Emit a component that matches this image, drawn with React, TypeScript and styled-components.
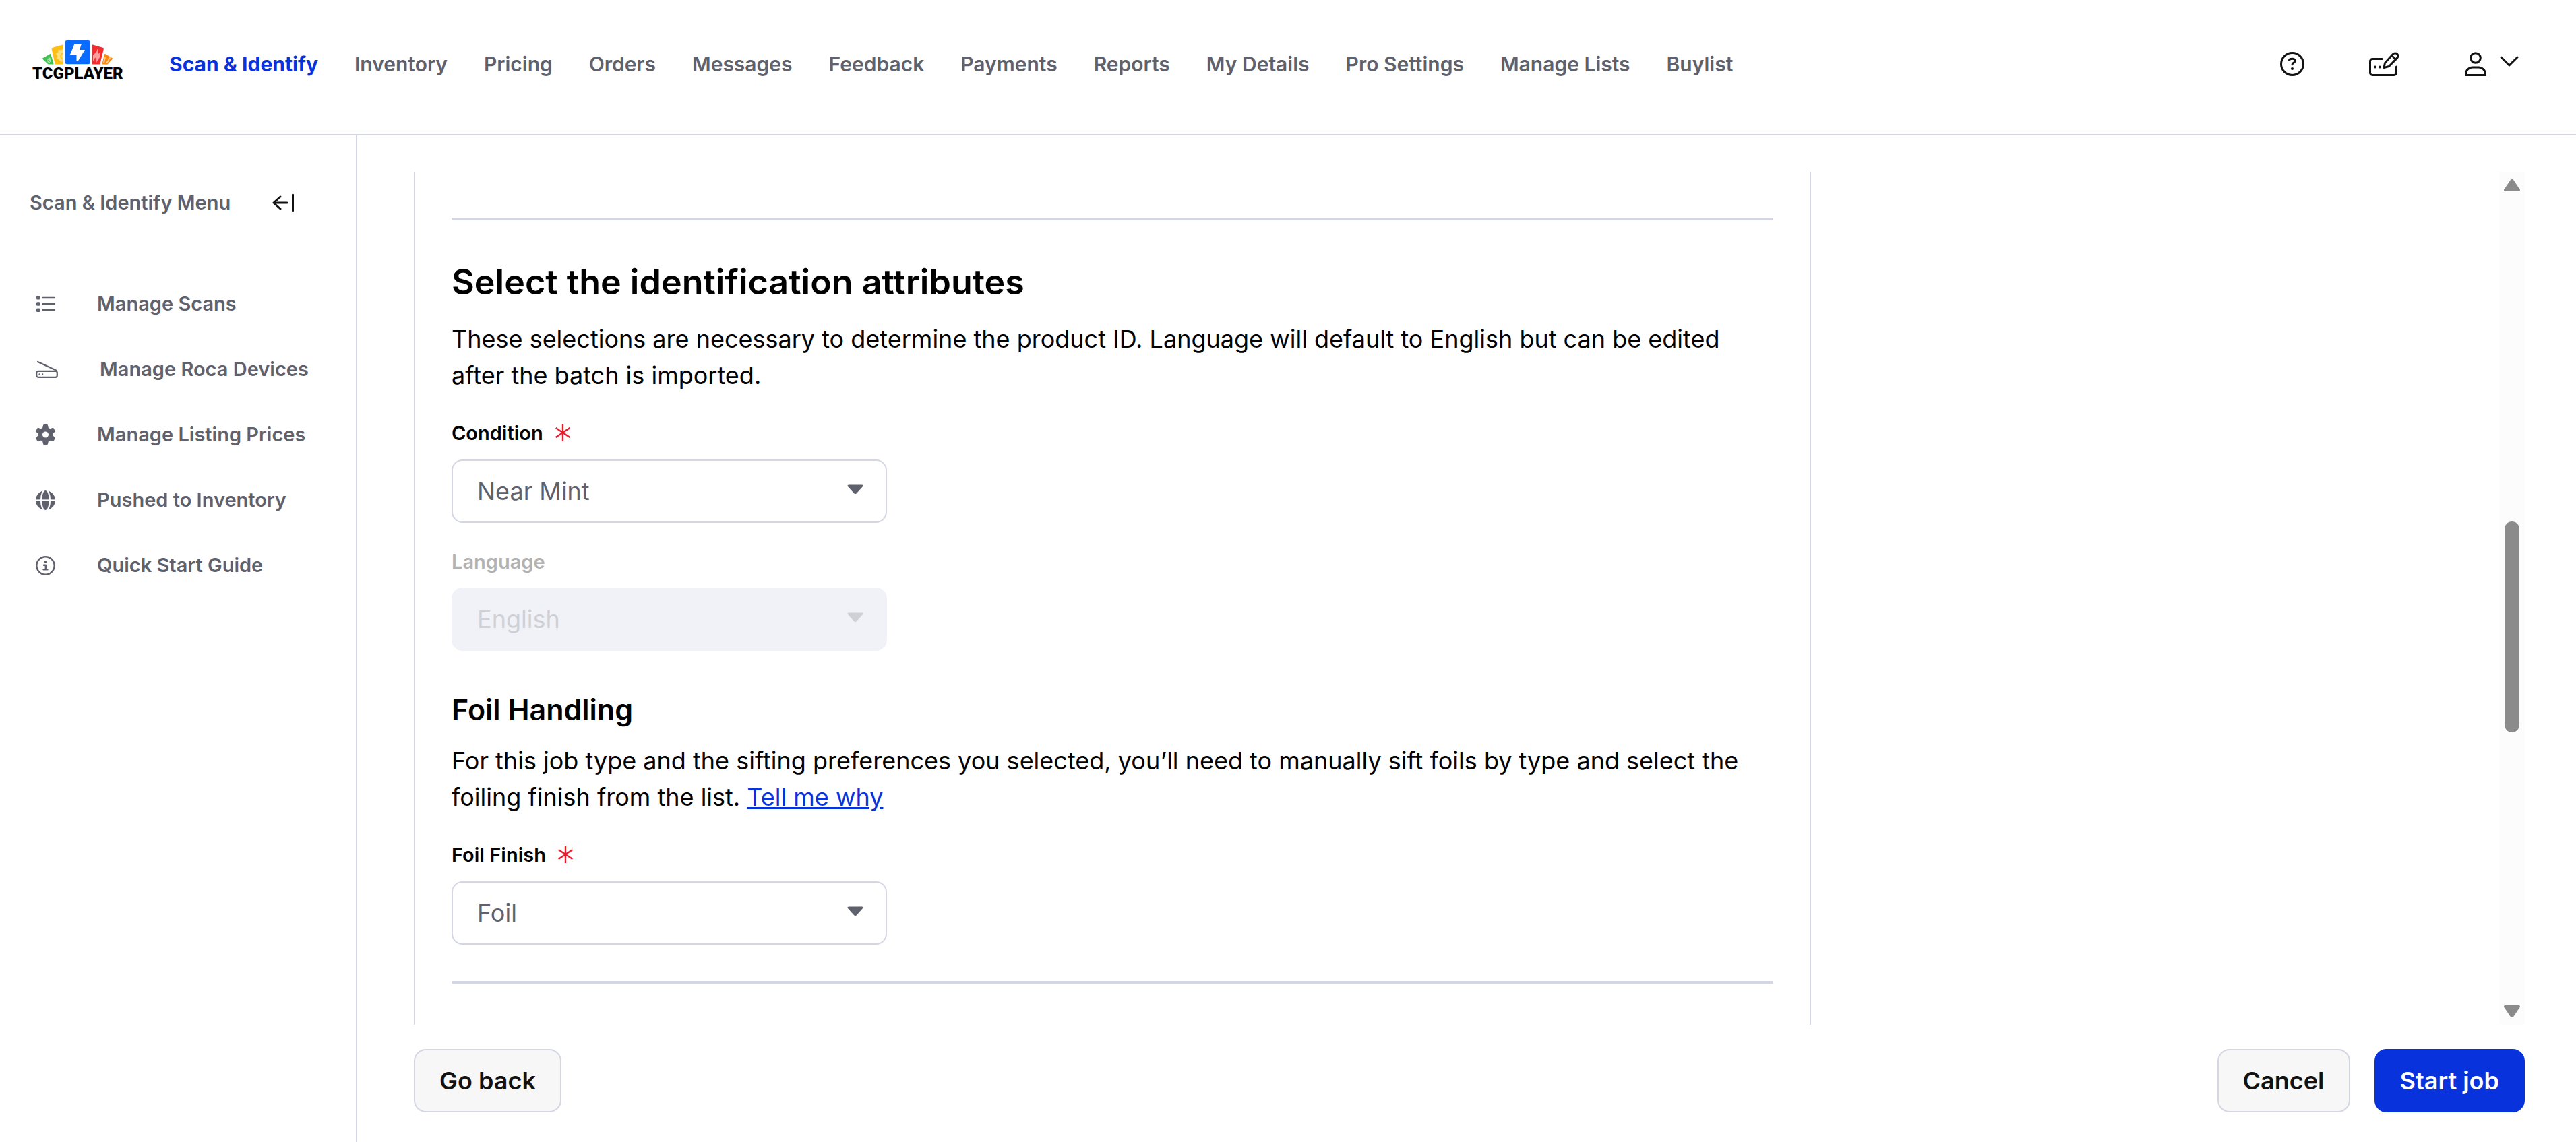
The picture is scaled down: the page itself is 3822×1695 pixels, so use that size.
import React, { useState } from "react";
import styled, { createGlobalStyle, css } from "styled-components";

const GlobalStyle = createGlobalStyle`
  *, *::before, *::after { box-sizing: border-box; }
  body { margin: 0; background: #fff; color: #000; font-family: Inter, "Liberation Sans", sans-serif; }
  button, select { font: inherit; }
  a { color: inherit; }
`;

const line = "#d4d7e3";
const slate = "#5f616d";
const blue = "#0833dc";
const ink = "#121212";

const Page = styled.div`
  display: flex;
  flex-direction: column;
  height: 100vh;
`;

const Header = styled.header`
  display: flex;
  align-items: center;
  height: 201px;
  padding: 0 85px 10px 48px;
  border-bottom: 2px solid ${line};
`;

const LogoLink = styled.a`
  display: flex;
  width: 136px;
  margin-right: 67px;
`;

const TopNav = styled.nav`
  display: flex;
  flex: 1;
  gap: 54px;
`;

const TopLink = styled.a<{ $active?: boolean }>`
  font-size: 30px;
  line-height: 40px;
  font-weight: ${(p) => (p.$active ? 700 : 600)};
  color: ${(p) => (p.$active ? blue : slate)};
  text-decoration: none;
  white-space: nowrap;
`;

const Tools = styled.div`
  display: flex;
  align-items: center;
  gap: 96px;
`;

const IconButton = styled.button`
  display: flex;
  align-items: center;
  gap: 20px;
  padding: 0;
  border: 0;
  background: none;
  color: ${ink};
  cursor: pointer;
`;

const Body = styled.div`
  display: flex;
  flex: 1;
  min-height: 0;
`;

const Sidebar = styled.aside`
  flex: none;
  width: 530px;
  padding: 80px 44px 0;
  border-right: 2px solid ${line};
`;

const SideHead = styled.div`
  display: flex;
  align-items: center;
  justify-content: space-between;
  padding-right: 46px;
`;

const SideTitle = styled.h2`
  margin: 0;
  font-size: 29px;
  line-height: 40px;
  font-weight: 600;
  color: ${slate};
`;

const SideList = styled.ul`
  display: flex;
  flex-direction: column;
  gap: 57px;
  margin: 110px 0 0;
  padding: 0 0 0 9px;
  list-style: none;
`;

const SideLink = styled.a`
  display: flex;
  align-items: center;
  gap: 62px;
  height: 40px;
  font-size: 29px;
  line-height: 40px;
  font-weight: 600;
  color: ${slate};
  text-decoration: none;
  white-space: nowrap;
`;

const Main = styled.main`
  display: flex;
  flex: 1;
  flex-direction: column;
  min-width: 0;
  padding: 54px 76px 44px 84px;
`;

const ScrollRow = styled.div`
  display: flex;
  flex: 1;
  min-height: 0;
`;

const Viewport = styled.div`
  flex: 1;
  min-width: 0;
  overflow: hidden;
`;

const Card = styled.section`
  max-width: 67%;
  min-height: 100%;
  padding: 68px 54px 60px;
  border: solid ${line};
  border-width: 0 2px;
`;

const Rule = styled.hr<{ $spaced?: boolean }>`
  height: 4px;
  margin: ${(p) => (p.$spaced ? "54px 0 0" : 0)};
  border: 0;
  background: ${line};
`;

const Title = styled.h1`
  margin: 58px 0 23px;
  font-size: 52px;
  line-height: 68px;
  font-weight: 600;
`;

const Subtitle = styled.h2`
  margin: 60px 0 22px;
  font-size: 43px;
  line-height: 54px;
  font-weight: 600;
`;

const Copy = styled.p`
  margin: 0;
  font-size: 36px;
  line-height: 54px;
`;

const TextLink = styled.a`
  color: ${blue};
  text-decoration: underline;
`;

const Field = styled.div`
  margin-top: 38px;
`;

const Label = styled.label<{ $disabled?: boolean }>`
  display: flex;
  align-items: center;
  gap: 18px;
  height: ${(p) => (p.$disabled ? 38 : 40)}px;
  margin-bottom: 20px;
  font-size: 29px;
  font-weight: 600;
  color: ${(p) => (p.$disabled ? "#b2b2b2" : "#000")};
`;

const SelectWrap = styled.div`
  display: grid;
  align-items: center;
  width: 646px;
  > * { grid-area: 1 / 1; }
  > svg { justify-self: end; margin-right: 35px; pointer-events: none; }
`;

const Select = styled.select`
  width: 100%;
  height: 94px;
  padding: 0 80px 0 36px;
  border: 2px solid ${line};
  border-radius: 16px;
  background: #fff;
  color: ${slate};
  font-size: 36px;
  appearance: none;
  &:disabled {
    border-color: #f1f2f7;
    background: #f1f2f7;
    color: #cfd0d5;
    opacity: 1;
  }
`;

const Track = styled.div`
  display: flex;
  flex-direction: column;
  align-items: center;
  width: 38px;
  padding: 11px 0;
  background: #fcfcfc;
`;

const Space = styled.div<{ $grow: number }>`
  flex: ${(p) => p.$grow} 0 0;
`;

const Thumb = styled.div<{ $grow: number }>`
  flex: ${(p) => p.$grow} 0 0;
  width: 22px;
  border-radius: 11px;
  background: #8b8b8b;
`;

const Footer = styled.footer`
  display: flex;
  align-items: center;
  gap: 36px;
  padding-top: 36px;
`;

const Button = styled.button<{ $primary?: boolean; $push?: boolean }>`
  height: 94px;
  padding: 0 36px;
  border: 2px solid ${line};
  border-radius: 18px;
  background: #f7f7f7;
  color: ${ink};
  font-size: 36px;
  font-weight: 600;
  cursor: pointer;
  ${(p) => p.$push && css`margin-right: auto;`}
  ${(p) =>
    p.$primary &&
    css`
      border-color: ${blue};
      background: ${blue};
      color: #fff;
    `}
`;

const LogoText = styled.text`
  font-family: Roboto, sans-serif;
  font-size: 24px;
  font-weight: 900;
`;

const Logo = () => (
  <svg width="136" height="70" viewBox="0 0 136 70" role="img" aria-label="TCGplayer">
    <g strokeLinejoin="round" strokeWidth="2">
      <path d="M16 27 26.500 21 30.500 34.500H24Z" fill="#41c252" stroke="#41c252" />
      <path d="M29.500 12 45 7.500V34.500H34.500Z" fill="#ffbe14" stroke="#ffbe14" />
      <path d="M89.500 7.500 105 12 99.500 34.500H89.500Z" fill="#f22d2d" stroke="#f22d2d" />
      <path d="M108 21 118 27 111 34.500H104.500Z" fill="#fd870c" stroke="#fd870c" />
    </g>
    <path d="M23 34C20 28 23 25 27 25l1 8c-3 2-5 0-5 0Zm0-5 5 5" fill="#a5e3ad" stroke="#41c252" strokeWidth="1" />
    <path d="m45.500 12.500-3 2-4-1v4l-4 2 3 4-2 4 4 1 2 3h4Z" fill="#ffdf80" />
    <path d="M45 19a5 5 0 0 0 0 9" fill="none" stroke="#ffbe14" strokeWidth="1.500" />
    <path d="m97 12 1 8 2-2v7l-5 8v-8l-3 2-2 4v-9l5-5Z" fill="#fb9e9e" />
    <path d="m106 33 2-8m2 8c4-2 2-5 6-8" fill="none" stroke="#ffd09a" strokeWidth="2" />
    <rect x="48.500" width="37.500" height="35.300" rx="3" fill="#0a6cff" />
    <path d="M62.500 5H73L70 14H78L67.500 31 65.500 30.500V22H55.600Z" fill="#fff" />
    <LogoText x="0" y="57">TCGPLAYER</LogoText>
  </svg>
);

const strokes = {
  fill: "none",
  stroke: "currentColor",
  strokeLinecap: "round",
  strokeLinejoin: "round",
} as const;

const HelpIcon = () => (
  <svg width="36" height="36" viewBox="0 0 36 36" {...strokes} strokeWidth="3">
    <circle cx="18" cy="18" r="16.500" />
    <path d="M13.500 12.500C13.500 10 22.500 9 22.500 13.200c0 3-4.500 2.800-4.500 5.600" />
    <circle cx="18" cy="25" r="2.100" fill="currentColor" stroke="none" />
  </svg>
);

const ChequeIcon = () => (
  <svg width="46" height="36" viewBox="0 0 46 36" {...strokes} strokeWidth="3">
    <path d="M19.500 10.500H5A3.500 3.500 0 0 0 1.500 14V31A3.500 3.500 0 0 0 5 34.500H37A3.500 3.500 0 0 0 40.500 31V22" />
    <path d="M22 23.500 23.500 16.500 35.500 3.300a4.200 4.200 0 0 1 6.300 5.600L29.500 21.500Z" />
    <path d="m33.500 5.500 6 5.500" />
    <circle cx="9" cy="22.500" r="2.100" fill="currentColor" stroke="none" />
    <circle cx="16" cy="22.500" r="2.100" fill="currentColor" stroke="none" />
  </svg>
);

const UserIcon = () => (
  <svg width="32" height="36" viewBox="0 0 32 36" {...strokes} strokeWidth="3">
    <circle cx="16" cy="9" r="7.300" />
    <path d="M1.500 34.500v-1.500a10 10 0 0 1 10-10h9a10 10 0 0 1 10 10v1.500Z" />
  </svg>
);

const ChevronIcon = () => (
  <svg width="28" height="24" viewBox="0 0 28 24" {...strokes} strokeWidth="3">
    <path d="m2 2 12 12 12-12" />
  </svg>
);

const CollapseIcon = () => (
  <svg width="34" height="28" viewBox="0 0 34 28" {...strokes} strokeWidth="3">
    <path d="M12 5 2 14l10 9M2 14h20M30.500 2v24" />
  </svg>
);

const ListIcon = () => (
  <svg width="29" height="26" viewBox="0 0 29 26" {...strokes} strokeWidth="2.400">
    <path d="M10.500 4H27.500M10.500 13H27.500M10.500 22H27.500" />
    <g fill="currentColor" stroke="none">
      <rect x="1" y="1" width="5.500" height="5.500" rx="1.500" />
      <rect x="1" y="10.200" width="5.500" height="5.500" rx="1.500" />
      <rect x="1" y="19.400" width="5.500" height="5.500" rx="1.500" />
    </g>
  </svg>
);

const ScannerIcon = () => (
  <svg width="33" height="26" viewBox="0 0 33 26" {...strokes} strokeWidth="2.200">
    <rect x="1.200" y="15.800" width="30.600" height="9" rx="2.500" />
    <path d="M3 2 30 14.500" />
    <path d="M5.500 20.300h.3M10 20.300h.3" />
  </svg>
);

const GearIcon = () => (
  <svg width="29" height="30" viewBox="0 0 29 30">
    <path
      fill="currentColor"
      fillRule="evenodd"
      d="M12.500 0h4a1.500 1.500 0 0 1 1.500 1.200l.8 3.600 2.400 1.400 3.600-1.200a1.500 1.500 0 0 1 1.800.6l2 3.600a1.500 1.500 0 0 1-.3 1.900L25.500 13.500v3l2.800 2.400a1.500 1.500 0 0 1 .3 1.900l-2 3.600a1.500 1.500 0 0 1-1.800.6l-3.600-1.200-2.400 1.400-.8 3.600a1.500 1.500 0 0 1-1.500 1.200h-4a1.500 1.500 0 0 1-1.500-1.200l-.8-3.600-2.400-1.400-3.600 1.200a1.500 1.500 0 0 1-1.800-.6l-2-3.600a1.500 1.500 0 0 1 .3-1.900l2.800-2.400v-3L.7 11.100A1.500 1.500 0 0 1 .4 9.200l2-3.600A1.500 1.500 0 0 1 4.200 5l3.600 1.200 2.400-1.400.8-3.600A1.500 1.500 0 0 1 12.500 0Zm2 10.500a4.500 4.500 0 1 0 0 9 4.500 4.500 0 0 0 0-9Z"
    />
  </svg>
);

const GlobeIcon = () => (
  <svg width="29" height="29" viewBox="0 0 29 29">
    <circle cx="14.500" cy="14.500" r="14.500" fill="currentColor" />
    <ellipse cx="14.500" cy="14.500" rx="6.500" ry="15.600" fill="none" stroke="#fff" strokeWidth="2.200" />
    <path d="M0 14.500H29" stroke="#fff" strokeWidth="2.200" />
  </svg>
);

const InfoIcon = () => (
  <svg width="29" height="29" viewBox="0 0 29 29" {...strokes} strokeWidth="2.400">
    <circle cx="14.500" cy="14.500" r="13.200" />
    <path d="M12 13.800h2.800v6.200M11.500 20.300h6" />
    <circle cx="14.500" cy="9" r="1.800" fill="currentColor" stroke="none" />
  </svg>
);

const RequiredMark = () => (
  <svg width="22" height="26" viewBox="0 0 22 26" fill="none" stroke="#ea1c2c" strokeWidth="2.400" role="img" aria-label="required">
    <path d="M11 0v26M.6 6 21.400 20M21.400 6 .6 20" />
  </svg>
);

const Caret = ({ up, color }: { up?: boolean; color: string }) => (
  <svg width="24" height="18" viewBox="0 0 24 18" fill={color} stroke={color} strokeWidth="4" strokeLinejoin="round">
    <path d={up ? "M2 16H22L12.500 2H11.500Z" : "M2 2H22L12.500 16H11.500Z"} />
  </svg>
);

const SelectCaret = ({ color }: { color: string }) => (
  <svg width="24" height="20" viewBox="0 0 24 20" fill={color} stroke={color} strokeWidth="3" strokeLinejoin="round">
    <path d="M2 2H22L12.500 12.500H11.500Z" />
  </svg>
);

const sections = [
  "Scan & Identify", "Inventory", "Pricing", "Orders", "Messages", "Feedback",
  "Payments", "Reports", "My Details", "Pro Settings", "Manage Lists", "Buylist",
];

const menu = [
  { label: "Manage Scans", Icon: ListIcon },
  { label: "Manage Roca Devices", Icon: ScannerIcon },
  { label: "Manage Listing Prices", Icon: GearIcon },
  { label: "Pushed to Inventory", Icon: GlobeIcon },
  { label: "Quick Start Guide", Icon: InfoIcon },
];

type DropdownProps = {
  id: string;
  label: string;
  options: string[];
  required?: boolean;
  disabled?: boolean;
};

const Dropdown = ({ id, label, options, required, disabled }: DropdownProps) => {
  const [value, setValue] = useState(options[0]);
  return (
    <Field>
      <Label htmlFor={id} $disabled={disabled}>
        {label}
        {required && <RequiredMark />}
      </Label>
      <SelectWrap>
        <Select id={id} value={value} disabled={disabled} onChange={(e) => setValue(e.target.value)}>
          {options.map((o) => (
            <option key={o}>{o}</option>
          ))}
        </Select>
        <SelectCaret color={disabled ? "#cfd0d5" : slate} />
      </SelectWrap>
    </Field>
  );
};

export default function App() {
  return (
    <Page>
      <GlobalStyle />
      <Header>
        <LogoLink href="#home">
          <Logo />
        </LogoLink>
        <TopNav>
          {sections.map((name, i) => (
            <TopLink key={name} href="#" $active={i === 0}>
              {name}
            </TopLink>
          ))}
        </TopNav>
        <Tools>
          <IconButton aria-label="Help"><HelpIcon /></IconButton>
          <IconButton aria-label="Feedback form"><ChequeIcon /></IconButton>
          <IconButton aria-label="Account">
            <UserIcon />
            <ChevronIcon />
          </IconButton>
        </Tools>
      </Header>
      <Body>
        <Sidebar>
          <SideHead>
            <SideTitle>Scan &amp; Identify Menu</SideTitle>
            <IconButton aria-label="Collapse menu"><CollapseIcon /></IconButton>
          </SideHead>
          <SideList>
            {menu.map(({ label, Icon }) => (
              <li key={label}>
                <SideLink href="#">
                  <Icon />
                  {label}
                </SideLink>
              </li>
            ))}
          </SideList>
        </Sidebar>
        <Main>
          <ScrollRow>
            <Viewport>
              <Card>
                <Rule />
                <Title>Select the identification attributes</Title>
                <Copy>
                  These selections are necessary to determine the product ID. Language will default to English
                  but can be edited after the batch is imported.
                </Copy>
                <Dropdown id="condition" label="Condition" options={["Near Mint"]} required />
                <Dropdown id="language" label="Language" options={["English"]} disabled />
                <Subtitle>Foil Handling</Subtitle>
                <Copy>
                  For this job type and the sifting preferences you selected, you’ll need to manually sift foils
                  by type and select the foiling finish from the list. <TextLink href="#why">Tell me why</TextLink>
                </Copy>
                <Dropdown id="finish" label="Foil Finish" options={["Foil"]} required />
                <Rule $spaced />
              </Card>
            </Viewport>
            <Track>
              <Caret up color="#8b8b8b" />
              <Space $grow={490} />
              <Thumb $grow={314} />
              <Space $grow={405} />
              <Caret color="#8b8b8b" />
            </Track>
          </ScrollRow>
          <Footer>
            <Button $push>Go back</Button>
            <Button>Cancel</Button>
            <Button $primary>Start job</Button>
          </Footer>
        </Main>
      </Body>
    </Page>
  );
}
